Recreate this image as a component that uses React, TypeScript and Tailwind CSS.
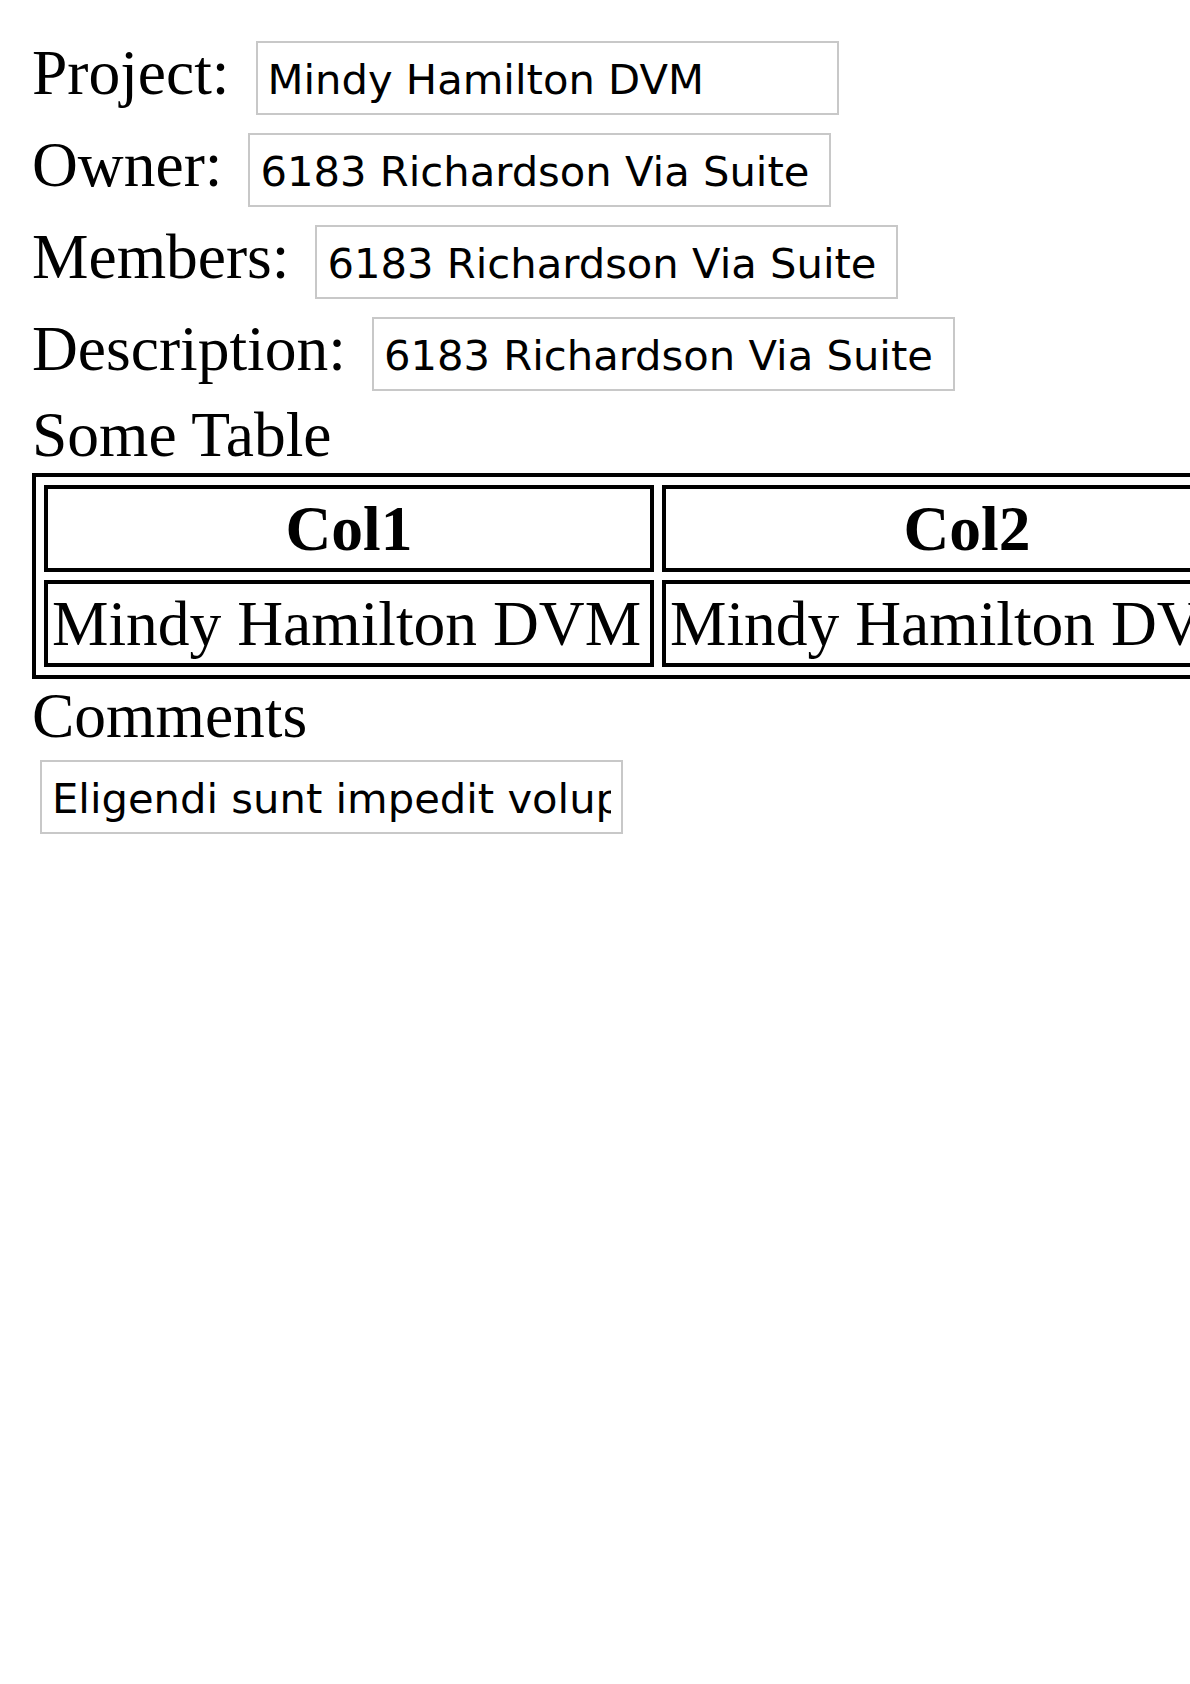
const fields = [
  { label: "Project:", value: "Mindy Hamilton DVM" },
  { label: "Owner:", value: "6183 Richardson Via Suite" },
  { label: "Members:", value: "6183 Richardson Via Suite" },
  { label: "Description:", value: "6183 Richardson Via Suite" },
];

const serif = "font-['Liberation_Serif','Times_New_Roman',serif]";
const inputCls =
  "h-[74px] w-[583px] border-2 border-[#c8c8c8] bg-white px-[10px] pt-[3px] text-[41.7px] text-black outline-none font-['DejaVu_Sans',sans-serif]";

export default function App() {
  return (
    <div className={`w-[1190px] min-h-[1684px] overflow-hidden bg-white text-black ${serif}`}>
      <div className="pt-[41px] pl-[32px]">
        <div className="flex flex-col gap-[18px]">
          {fields.map((f) => (
            <div key={f.label} className="flex items-baseline gap-[26px]">
              <span className="text-[63.5px] leading-[56px] whitespace-nowrap">{f.label}</span>
              <input className={inputCls} defaultValue={f.value} readOnly />
            </div>
          ))}
        </div>

        <div className="mt-[7px] text-[63.5px] leading-[73px]">Some Table</div>
        <table className="mt-[2px] w-max border-separate border-[4px] border-black [border-spacing:8px] text-[63.5px]">
          <thead>
            <tr>
              <th className="w-[610px] border-[4px] border-black p-[4px] text-center font-bold leading-[71px]">
                Col1
              </th>
              <th className="w-[610px] border-[4px] border-black p-[4px] text-center font-bold leading-[71px]">
                Col2
              </th>
            </tr>
          </thead>
          <tbody>
            <tr>
              <td className="w-[610px] border-[4px] border-black p-[4px] text-left leading-[71px] whitespace-nowrap">
                Mindy Hamilton DVM
              </td>
              <td className="w-[610px] border-[4px] border-black p-[4px] text-left leading-[71px] whitespace-nowrap">
                Mindy Hamilton DVM
              </td>
            </tr>
          </tbody>
        </table>

        <div className="text-[63.5px] leading-[73px]">Comments</div>
        <div className="mt-[8px] ml-[8px]">
          <input
            className={inputCls}
            defaultValue="Eligendi sunt impedit voluptatem quia et"
            readOnly
          />
        </div>
      </div>
    </div>
  );
}
